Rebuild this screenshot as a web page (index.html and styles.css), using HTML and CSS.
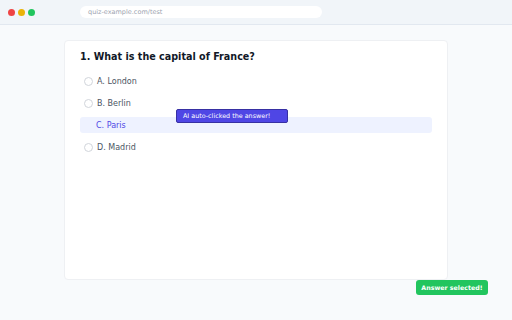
FILE: index.html
```html
<!DOCTYPE html>
<html lang="en">
<head>
    <meta charset="UTF-8">
    <meta name="viewport" content="width=device-width, initial-scale=1.0">
    <title>Quiz</title>
    <link rel="stylesheet" href="styles.css">
</head>
<body>
    <!-- Browser chrome -->
    <div class="browser-bar">
        <div class="dots">
            <span class="dot red"></span>
            <span class="dot yellow"></span>
            <span class="dot green"></span>
        </div>
        <div class="url">quiz-example.com/test</div>
    </div>

    <div class="page">
        <div class="card">
            <h2>1. What is the capital of France?</h2>
            <ul class="options">
                <li class="option"><span class="radio"></span>A. London</li>
                <li class="option"><span class="radio"></span>B. Berlin</li>
                <li class="option selected">C. Paris</li>
                <li class="option"><span class="radio"></span>D. Madrid</li>
            </ul>
            <div class="tooltip">AI auto-clicked the answer!</div>
        </div>
    </div>

    <div class="toast">Answer selected!</div>
</body>
</html>
```

FILE: styles.css
```css
body {
    font-family: "DejaVu Sans", sans-serif;
    margin: 0;
    width: 512px;
    height: 320px;
    background-color: #f8fafc;
    overflow: hidden;
}

.browser-bar {
    display: flex;
    align-items: center;
    height: 24px;
    padding-left: 8px;
    background-color: #f1f5f9;
    border-bottom: 1px solid #e2e8f0;
}

.dots {
    display: flex;
    gap: 3px;
}

.dot {
    width: 7px;
    height: 7px;
    border-radius: 50%;
}

.red { background: #ef4444; }
.yellow { background: #eab308; }
.green { background: #22c55e; }

.url {
    margin-left: 45px;
    width: 234px;
    height: 12px;
    line-height: 12px;
    padding-left: 8px;
    background: white;
    border-radius: 6px;
    font-size: 6.5px;
    color: #9ca3af;
}

.page {
    padding: 15px 64px 0;
}

.card {
    position: relative;
    height: 212px;
    padding: 10px 15px 16px;
    background: white;
    border: 1px solid #eef0f3;
    border-radius: 4px;
}

h2 {
    margin: 0 0 10px;
    font-size: 9.6px;
    line-height: 12px;
    color: #111827;
}

.options {
    list-style: none;
    margin: 0;
    padding: 0;
    display: flex;
    flex-direction: column;
    gap: 6px;
}

.option {
    display: flex;
    align-items: center;
    height: 16px;
    padding-left: 4px;
    font-size: 8px;
    color: #4b5563;
    border-radius: 3px;
}

.option.selected {
    padding-left: 16px;
    background: #eef2ff;
    color: #4f46e5;
}

.radio {
    width: 7px;
    height: 7px;
    margin-right: 4px;
    border: 1px solid #d1d5db;
    border-radius: 50%;
}

.tooltip {
    position: absolute;
    left: 111px;
    top: 68px;
    width: 112px;
    height: 14px;
    line-height: 12px;
    padding-left: 6px;
    box-sizing: border-box;
    background: #4f46e5;
    border: 1px solid #3730a3;
    border-radius: 2px;
    font-size: 6.4px;
    color: white;
}

.toast {
    position: absolute;
    right: 24px;
    bottom: 25px;
    width: 72px;
    height: 15px;
    line-height: 15px;
    text-align: center;
    background: #22c55e;
    border-radius: 3px;
    font-size: 6.3px;
    font-weight: bold;
    color: white;
}
```
